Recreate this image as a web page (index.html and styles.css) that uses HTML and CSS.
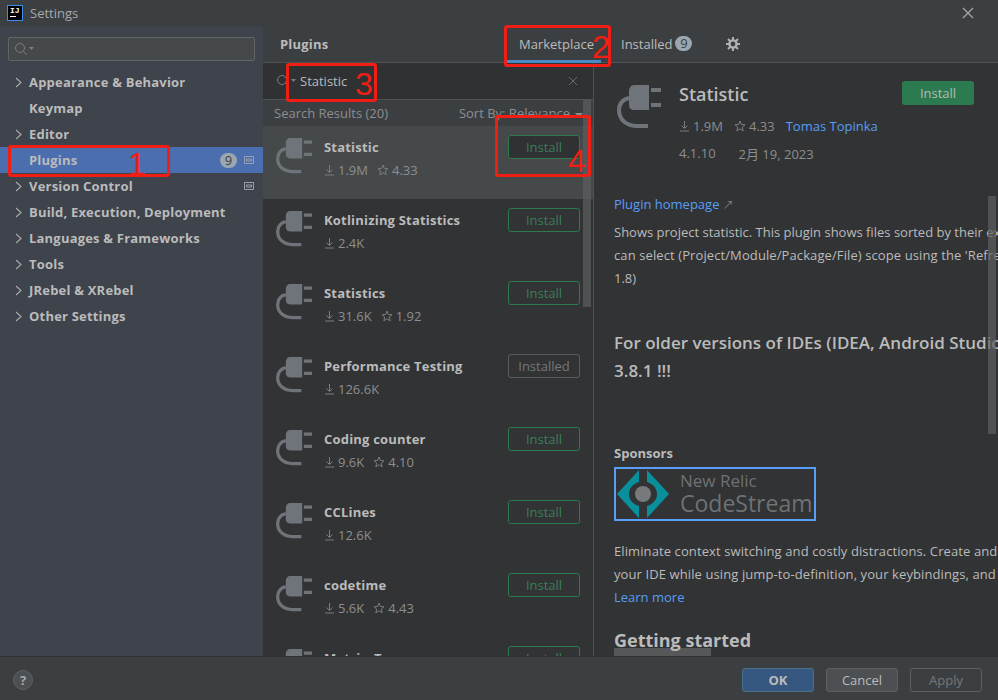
FILE: index.html
```html
<!DOCTYPE html>
<html>
<head>
    <title>Settings</title>
    <link rel="stylesheet" href="styles.css">
</head>
<body>
    <svg class="defs" width="0" height="0">
        <symbol id="plug" viewBox="0 0 44 44">
            <path d="M17 0H32V25H17C14 25 12 23 12 20V6C12 3 14 0 17 0Z" fill="#6e7479"/>
            <rect x="34" y="3" width="10" height="4" fill="#6e7479"/>
            <rect x="34" y="18" width="10" height="4" fill="#6e7479"/>
            <path d="M12 13C6 14 2 19 2 25C2 35 10 41 20 41H31" fill="none" stroke="#6e7479" stroke-width="4"/>
        </symbol>
        <symbol id="down" viewBox="0 0 11 12">
            <path d="M5.5 1V8M2.5 5.5L5.5 8.5L8.5 5.5M1 11H10" fill="none" stroke="currentColor"/>
        </symbol>
        <symbol id="star" viewBox="0 0 12 12">
            <path d="M6 1L7.4 4.5L11 4.8L8.3 7.1L9.2 10.8L6 8.8L2.8 10.8L3.7 7.1L1 4.8L4.6 4.5Z" fill="none" stroke="currentColor"/>
        </symbol>
        <symbol id="lens" viewBox="0 0 20 14">
            <circle cx="6" cy="6" r="4.5" fill="none" stroke="currentColor"/>
            <path d="M9.5 9.5L13 13" stroke="currentColor"/>
            <path d="M15 5H20L17.5 8Z" fill="currentColor"/>
        </symbol>
        <symbol id="chevron" viewBox="0 0 7 11">
            <path d="M1 1L6 5.5L1 10" fill="none" stroke="currentColor" stroke-width="1.2"/>
        </symbol>
        <symbol id="page" viewBox="0 0 10 8">
            <path d="M.5 .5H9.5V7.5H.5ZM2.5 3H7.5V5H2.5Z" fill="none" stroke="currentColor"/>
        </symbol>
    </svg>

    <div class="window">
        <div class="titlebar">
            <div class="app-logo"><span>IJ</span><i></i></div>
            <div class="title">Settings</div>
            <svg class="close" width="12" height="12" viewBox="0 0 12 12"><path d="M1 1L11 11M11 1L1 11" stroke="#a6a8aa" stroke-width="1.2"/></svg>
        </div>

        <div class="content">
            <div class="sidebar">
                <div class="side-search"><svg width="20" height="14"><use href="#lens"/></svg></div>
                <div class="tree">
                    <div class="tree-item"><svg class="arrow"><use href="#chevron"/></svg>Appearance &amp; Behavior</div>
                    <div class="tree-item">Keymap</div>
                    <div class="tree-item"><svg class="arrow"><use href="#chevron"/></svg>Editor</div>
                    <div class="tree-item selected">Plugins<span class="spacer"></span><span class="badge">9</span><svg class="page"><use href="#page"/></svg></div>
                    <div class="tree-item"><svg class="arrow"><use href="#chevron"/></svg>Version Control<span class="spacer"></span><svg class="page"><use href="#page"/></svg></div>
                    <div class="tree-item"><svg class="arrow"><use href="#chevron"/></svg>Build, Execution, Deployment</div>
                    <div class="tree-item"><svg class="arrow"><use href="#chevron"/></svg>Languages &amp; Frameworks</div>
                    <div class="tree-item"><svg class="arrow"><use href="#chevron"/></svg>Tools</div>
                    <div class="tree-item"><svg class="arrow"><use href="#chevron"/></svg>JRebel &amp; XRebel</div>
                    <div class="tree-item"><svg class="arrow"><use href="#chevron"/></svg>Other Settings</div>
                </div>
            </div>

            <div class="main">
                <div class="tabbar">
                    <div class="tabbar-title">Plugins</div>
                    <div class="tab active">Marketplace</div>
                    <div class="tab installed">Installed<span class="badge">9</span></div>
                    <svg class="gear" width="14" height="14" viewBox="0 0 14 14"><circle cx="7" cy="7" r="3.6" fill="none" stroke="#afb1b3" stroke-width="2.4"/><path d="M7 0V3M7 11V14M0 7H3M11 7H14M2 2L4 4M10 10L12 12M12 2L10 4M4 10L2 12" stroke="#afb1b3" stroke-width="2"/></svg>
                </div>

                <div class="panes">
                    <div class="list-pane">
                        <div class="list-search">
                            <svg class="lens" width="20" height="14"><use href="#lens"/></svg>
                            <span class="query">Statistic</span>
                            <svg class="clear" width="8" height="8" viewBox="0 0 8 8"><path d="M0 0L8 8M8 0L0 8" stroke="#6a6c6e"/></svg>
                        </div>
                        <div class="list-head">
                            <span>Search Results (20)</span>
                            <span>Sort By: Relevance<i class="caret"></i></span>
                        </div>
                        <div class="rows">
                            <div class="row selected">
                                <svg class="plug"><use href="#plug"/></svg>
                                <div class="info">
                                    <div class="name">Statistic</div>
                                    <div class="stats"><svg class="ico"><use href="#down"/></svg>1.9M<svg class="ico star"><use href="#star"/></svg>4.33</div>
                                </div>
                                <div class="btn-outline">Install</div>
                            </div>
                            <div class="row">
                                <svg class="plug"><use href="#plug"/></svg>
                                <div class="info">
                                    <div class="name">Kotlinizing Statistics</div>
                                    <div class="stats"><svg class="ico"><use href="#down"/></svg>2.4K</div>
                                </div>
                                <div class="btn-outline">Install</div>
                            </div>
                            <div class="row">
                                <svg class="plug"><use href="#plug"/></svg>
                                <div class="info">
                                    <div class="name">Statistics</div>
                                    <div class="stats"><svg class="ico"><use href="#down"/></svg>31.6K<svg class="ico star"><use href="#star"/></svg>1.92</div>
                                </div>
                                <div class="btn-outline">Install</div>
                            </div>
                            <div class="row">
                                <svg class="plug"><use href="#plug"/></svg>
                                <div class="info">
                                    <div class="name">Performance Testing</div>
                                    <div class="stats"><svg class="ico"><use href="#down"/></svg>126.6K</div>
                                </div>
                                <div class="btn-outline done">Installed</div>
                            </div>
                            <div class="row">
                                <svg class="plug"><use href="#plug"/></svg>
                                <div class="info">
                                    <div class="name">Coding counter</div>
                                    <div class="stats"><svg class="ico"><use href="#down"/></svg>9.6K<svg class="ico star"><use href="#star"/></svg>4.10</div>
                                </div>
                                <div class="btn-outline">Install</div>
                            </div>
                            <div class="row">
                                <svg class="plug"><use href="#plug"/></svg>
                                <div class="info">
                                    <div class="name">CCLines</div>
                                    <div class="stats"><svg class="ico"><use href="#down"/></svg>12.6K</div>
                                </div>
                                <div class="btn-outline">Install</div>
                            </div>
                            <div class="row">
                                <svg class="plug"><use href="#plug"/></svg>
                                <div class="info">
                                    <div class="name">codetime</div>
                                    <div class="stats"><svg class="ico"><use href="#down"/></svg>5.6K<svg class="ico star"><use href="#star"/></svg>4.43</div>
                                </div>
                                <div class="btn-outline">Install</div>
                            </div>
                            <div class="row">
                                <svg class="plug"><use href="#plug"/></svg>
                                <div class="info">
                                    <div class="name">MetricsTree</div>
                                </div>
                                <div class="btn-outline">Install</div>
                            </div>
                        </div>
                        <div class="scroll list-scroll"></div>
                    </div>

                    <div class="detail">
                        <div class="detail-head">
                            <svg class="detail-plug"><use href="#plug"/></svg>
                            <div class="detail-info">
                                <div class="detail-name">Statistic</div>
                                <div class="detail-meta"><svg class="ico"><use href="#down"/></svg>1.9M<svg class="ico star"><use href="#star"/></svg>4.33<a class="link vendor">Tomas Topinka</a></div>
                                <div class="detail-meta version">4.1.10<span class="date">2月 19, 2023</span></div>
                            </div>
                            <div class="btn-install">Install</div>
                        </div>
                        <div class="text homepage"><a class="link">Plugin homepage</a> <span class="ext">↗</span></div>
                        <div class="text">Shows project statistic. This plugin shows files sorted by their extension, size, lines of code. You</div>
                        <div class="text wide">can select (Project/Module/Package/File) scope using the 'Refresh on selection' button in the tool</div>
                        <div class="text">1.8)</div>
                        <div class="older">For older versions of IDEs (IDEA, Android Studio 3.8 or less) use version</div>
                        <div class="older">3.8.1 !!!</div>
                        <div class="sponsors">Sponsors</div>
                        <div class="sponsor-box">
                            <svg class="cs-logo" width="52" height="48" viewBox="0 0 52 48">
                                <path d="M22 0V12C16 14 12 18 12 24C12 30 16 34 22 36V48L0 24Z" fill="#0a8f9c"/>
                                <path d="M30 0V12C36 14 40 18 40 24C40 30 36 34 30 36V48L52 24Z" fill="#0a8f9c"/>
                                <circle cx="26" cy="24" r="8" fill="#77797b"/>
                            </svg>
                            <div class="cs-text">
                                <div class="cs-top">New Relic</div>
                                <div class="cs-main">CodeStream</div>
                            </div>
                        </div>
                        <div class="text first wide">Eliminate context switching and costly distractions. Create and review pull requests from</div>
                        <div class="text wide">your IDE while using jump-to-definition, your keybindings, and other IDE favorites.</div>
                        <div class="text"><a class="link">Learn more</a></div>
                        <div class="getting">Getting started</div>
                        <div class="shot"></div>
                        <div class="scroll detail-scroll"></div>
                    </div>
                </div>
            </div>
        </div>

        <div class="footer">
            <div class="help">?</div>
            <div class="spacer"></div>
            <div class="btn ok">OK</div>
            <div class="btn cancel">Cancel</div>
            <div class="btn apply">Apply</div>
        </div>

        <div class="mark mark-1"><span>1</span></div>
        <div class="mark mark-2"><span>2</span></div>
        <div class="mark mark-3"><span>3</span></div>
        <div class="mark mark-4"><span>4</span></div>
    </div>
</body>
</html>
```

FILE: styles.css
```css
* {
    box-sizing: border-box;
}
body {
    margin: 0;
    font-family: "Open Sans", "Noto Sans CJK SC", sans-serif;
    font-size: 13px;
    color: #bbbbbb;
    background: #3c3f41;
}
.defs {
    position: absolute;
}
.window {
    position: relative;
    width: 998px;
    height: 700px;
    overflow: hidden;
    display: flex;
    flex-direction: column;
}
.spacer {
    flex: 1;
}

/* title bar */
.titlebar {
    height: 27px;
    flex: none;
    display: flex;
    align-items: center;
    padding: 0 24px 1px 7px;
}
.app-logo {
    width: 16px;
    height: 16px;
    background: #000;
    border: 1px solid #3a8ee6;
    color: #fff;
    font: bold 8px/9px "Liberation Mono", monospace;
    padding-left: 2px;
}
.app-logo i {
    display: block;
    width: 6px;
    height: 1px;
    margin-top: 1px;
    background: #fff;
}
.title {
    margin-left: 7px;
    color: #a7a9ab;
    flex: 1;
}

.content {
    flex: 1;
    display: flex;
    min-height: 0;
}

/* left tree */
.sidebar {
    width: 263px;
    flex: none;
    background: #3e434c;
    padding-top: 10px;
}
.side-search {
    height: 24px;
    margin: 0 8px 8px 8px;
    background: #45494a;
    border: 1px solid #646464;
    border-radius: 2px;
    color: #7b7d7f;
    padding: 4px 0 0 5px;
}
.tree-item {
    height: 26px;
    display: flex;
    align-items: center;
    padding: 0 9px 0 29px;
    position: relative;
    font-weight: 700;
    letter-spacing: .2px;
}
.tree-item.selected {
    background: #4b6eaf;
}
.arrow {
    position: absolute;
    left: 15px;
    top: 8px;
    width: 7px;
    height: 11px;
    color: #a6a8aa;
}
.badge {
    width: 17px;
    height: 15px;
    border-radius: 8px;
    background: #9aa7b0;
    color: #3c3f41;
    font-size: 13px;
    font-weight: 400;
    line-height: 15px;
    text-align: center;
}
.page {
    width: 10px;
    height: 8px;
    margin-left: 7px;
    color: #9aa0a8;
}

/* top tabs */
.main {
    flex: 1;
    min-width: 0;
    display: flex;
    flex-direction: column;
}
.tabbar {
    height: 36px;
    flex: none;
    display: flex;
    align-items: center;
    border-bottom: 1px solid #515151;
    padding-left: 17px;
}
.tabbar-title {
    font-weight: 700;
    letter-spacing: .2px;
    width: 226px;
}
.tabbar-title, .gear {
    margin-bottom: 2px;
}
.tab {
    height: 36px;
    line-height: 34px;
}
.tab.active {
    width: 95px;
    padding-left: 13px;
    border-bottom: 3px solid #4a88c7;
}
.tab.installed {
    margin-left: 20px;
    width: 105px;
    display: flex;
    align-items: center;
    gap: 3px;
    padding-bottom: 2px;
}

.panes {
    flex: 1;
    display: flex;
    min-height: 0;
}

/* plugin list */
.list-pane {
    width: 331px;
    flex: none;
    position: relative;
    background: #313335;
    border-right: 1px solid #515151;
    overflow: hidden;
}
.list-search {
    height: 37px;
    background: #2f3133;
    border-bottom: 1px solid #515151;
    display: flex;
    align-items: center;
    padding: 0 16px 0 13px;
}
.lens {
    color: #7b7d7f;
}
.query {
    margin-left: 4px;
    flex: 1;
}
.list-head {
    height: 26px;
    background: #3c3f41;
    color: #8c8e90;
    display: flex;
    align-items: center;
    justify-content: space-between;
    padding: 0 10px 0 11px;
}
.caret {
    display: inline-block;
    margin-left: 5px;
    vertical-align: middle;
    border-left: 4px solid transparent;
    border-right: 4px solid transparent;
    border-top: 4px solid #8c8e90;
}
.row {
    height: 73px;
    display: flex;
    padding: 9px 13px 0 13px;
}
.row.selected {
    background: #45494a;
}
.plug {
    width: 36px;
    height: 36px;
    margin-top: 3px;
    flex: none;
}
.info {
    flex: 1;
    margin-left: 12px;
}
.name {
    font-weight: 700;
    letter-spacing: .2px;
    line-height: 24px;
}
.stats {
    color: #8c8e90;
    line-height: 22px;
    display: flex;
    align-items: center;
}
.ico {
    width: 11px;
    height: 12px;
    margin-right: 3px;
    color: #7b7d7f;
}
.ico.star {
    width: 12px;
    margin-left: 9px;
}
.btn-outline {
    width: 72px;
    height: 24px;
    line-height: 22px;
    text-align: center;
    border: 1px solid #2c7a4d;
    border-radius: 3px;
    color: #3a7f57;
}
.row.selected .btn-outline {
    background: #2f3133;
}
.btn-outline.done {
    border-color: #5a5c5e;
    color: #74777a;
}
.scroll {
    position: absolute;
    background: #5c5e60;
    opacity: .7;
}
.list-scroll {
    left: 320px;
    top: 37px;
    width: 8px;
    height: 207px;
}
.detail-scroll {
    left: 394px;
    top: 133px;
    width: 8px;
    height: 238px;
}

/* right side */
.detail {
    flex: 1;
    min-width: 0;
    position: relative;
    background: #313335;
    padding-left: 20px;
    overflow: hidden;
    white-space: nowrap;
}
.detail-head {
    display: flex;
    height: 125px;
    padding-top: 18px;
}
.detail-plug {
    width: 44px;
    height: 44px;
    margin: 4px 0 0 3px;
    flex: none;
}
.detail-info {
    width: 223px;
    margin-left: 18px;
}
.detail-name {
    font-size: 18px;
    font-weight: 600;
    line-height: 26px;
}
.detail-meta {
    margin-top: 9px;
    height: 20px;
    display: flex;
    align-items: center;
    color: #8c8e90;
}
.detail-meta .ico.star {
    margin-left: 11px;
}
.detail-meta.version {
    margin-top: 7px;
}
.vendor {
    margin-left: 11px;
}
.date {
    margin-left: 23px;
}
.link {
    color: #589df6;
}
.btn-install {
    width: 72px;
    height: 24px;
    line-height: 24px;
    text-align: center;
    background: #2c7a50;
    border-radius: 3px;
    color: #b0bcb5;
}
.text {
    line-height: 23px;
}
.wide {
    letter-spacing: .1px;
}
.homepage {
    margin-top: 5px;
    margin-bottom: 5px;
}
.ext {
    color: #808284;
    font-size: 11px;
}
.older {
    font-size: 17px;
    font-weight: 600;
    line-height: 28px;
}
.text + .older {
    margin-top: 39px;
}
.sponsors {
    margin-top: 58px;
    font-weight: 700;
    line-height: 20px;
}
.sponsor-box {
    width: 202px;
    height: 54px;
    margin-top: 4px;
    border: 2px solid #589df6;
    display: flex;
    align-items: center;
    padding-left: 1px;
    color: #6f7173;
}
.cs-text {
    margin-left: 11px;
}
.cs-top {
    font-size: 17px;
    line-height: 19px;
}
.cs-main {
    font-size: 23px;
    line-height: 27px;
}
.text.first {
    margin-top: 19px;
}
.getting {
    margin-top: 18px;
    font-size: 18px;
    font-weight: 700;
    line-height: 26px;
}
.shot {
    width: 97px;
    height: 10px;
    margin-top: -5px;
    background: #555759;
}

/* footer */
.footer {
    height: 44px;
    flex: none;
    background: #3c3f41;
    border-top: 1px solid #323232;
    display: flex;
    align-items: flex-start;
    padding: 11px 16px 0 13px;
    gap: 12px;
}
.help {
    width: 20px;
    height: 20px;
    margin-top: 2px;
    border-radius: 50%;
    background: #4c5052;
    border: 1px solid #5e6060;
    text-align: center;
    font-weight: 700;
    line-height: 18px;
    color: #a6a8aa;
}
.btn {
    width: 72px;
    height: 24px;
    line-height: 22px;
    text-align: center;
    border: 1px solid #5e6060;
    border-radius: 3px;
}
.btn.ok {
    background: #365880;
    border-color: #4c708c;
    font-weight: 700;
}
.btn.cancel {
    background: #4c5052;
}
.btn.apply {
    color: #777777;
}

/* red annotations drawn on the screenshot */
.mark {
    position: absolute;
    border: 3px solid #f01e14;
    border-radius: 3px;
}
.mark span {
    position: absolute;
    color: #f01e14;
    font: 32px/32px "Liberation Sans", sans-serif;
}
.mark-1 {
    left: 8px;
    top: 145px;
    width: 162px;
    height: 32px;
}
.mark-1 span {
    left: 117px;
    top: 0;
}
.mark-2 {
    left: 504px;
    top: 25px;
    width: 107px;
    height: 42px;
}
.mark-2 span {
    left: 85px;
    top: 3px;
}
.mark-3 {
    left: 286px;
    top: 63px;
    width: 91px;
    height: 39px;
}
.mark-3 span {
    left: 66px;
    top: 2px;
}
.mark-4 {
    left: 495px;
    top: 115px;
    width: 96px;
    height: 62px;
}
.mark-4 span {
    left: 70px;
    top: 27px;
}
```
